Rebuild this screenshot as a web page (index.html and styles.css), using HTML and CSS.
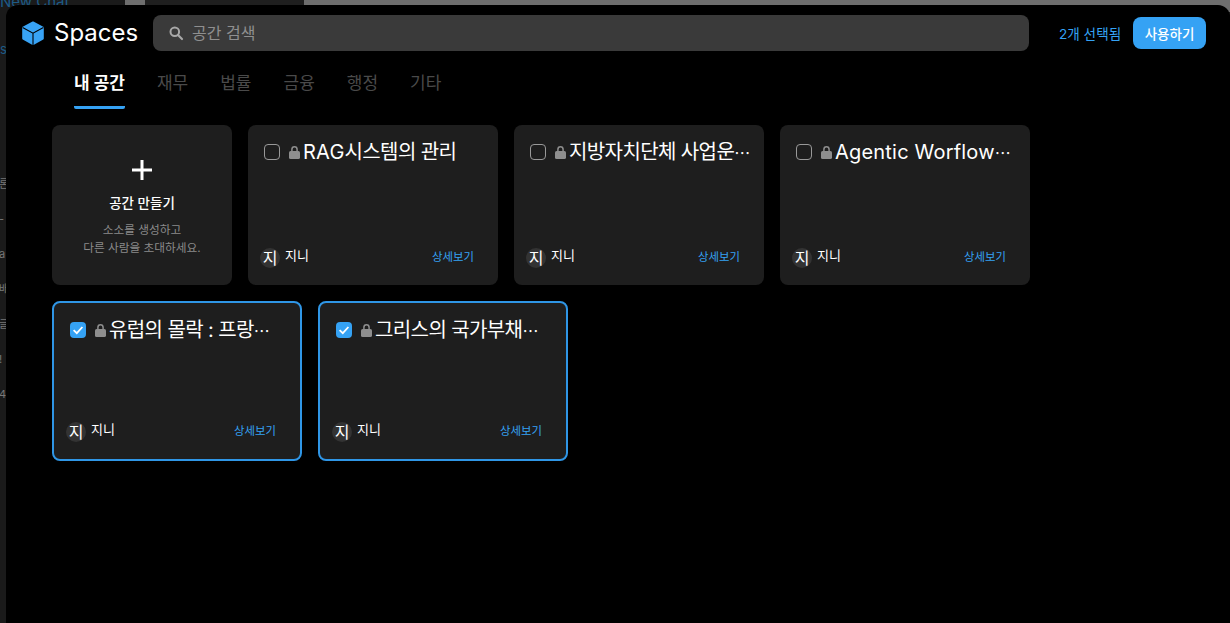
FILE: index.html
```html
<!DOCTYPE html>
<html lang="ko">
<head>
    <meta charset="UTF-8">
    <title>Spaces</title>
    <link rel="stylesheet" href="styles.css">
</head>
<body>
    <!-- app behind the modal -->
    <div class="backdrop">
        <div class="backdrop-top">
            <div class="chat-tab"><span>New Chat</span></div>
            <div class="top-gap small"></div>
            <div class="top-dark"></div>
            <div class="top-gap"></div>
        </div>
        <div class="side-list">
            <span class="side-s">s</span>
            <span class="side-item first">론</span>
            <span class="side-item">-</span>
            <span class="side-item">a</span>
            <span class="side-item">배</span>
            <span class="side-item">글</span>
            <span class="side-item">!</span>
            <span class="side-item">4</span>
        </div>
    </div>

    <div class="modal">
        <header class="modal-header">
            <div class="brand">
                <svg class="cube" viewBox="0 0 24 24" width="24" height="24">
                    <path d="M12 1.4 21.8 6.6V17.6L12 23 2.2 17.6V6.6Z" fill="#38a3f5" stroke="#38a3f5" stroke-width="2" stroke-linejoin="round"/>
                    <path d="M1.6 6.4 12 12.2 22.4 6.4M12 12.2V24" fill="none" stroke="#000" stroke-width="1.1"/>
                </svg>
                <span class="brand-name">Spaces</span>
            </div>
            <div class="search">
                <svg viewBox="0 0 16 16" width="16" height="16">
                    <circle cx="6.8" cy="6.8" r="4.3" fill="none" stroke="#a8a8a8" stroke-width="2"/>
                    <path d="M10 10l4 4" stroke="#a8a8a8" stroke-width="2.2" stroke-linecap="round"/>
                </svg>
                <span>공간 검색</span>
            </div>
            <span class="selected-count">2개 선택됨</span>
            <button class="use-btn">사용하기</button>
        </header>

        <nav class="tabs">
            <a class="tab active">내 공간</a>
            <a class="tab">재무</a>
            <a class="tab">법률</a>
            <a class="tab">금융</a>
            <a class="tab">행정</a>
            <a class="tab">기타</a>
        </nav>

        <main class="spaces">
            <div class="card create-card">
                <svg viewBox="0 0 20 20" width="20" height="20">
                    <path d="M10 0v20M0 10h20" stroke="#fff" stroke-width="3"/>
                </svg>
                <div class="create-title">공간 만들기</div>
                <div class="create-desc">소소를 생성하고<br>다른 사람을 초대하세요.</div>
            </div>

            <div class="card">
                <div class="card-title">
                    <span class="check"></span>
                    <svg class="lock" viewBox="0 0 11 13" width="11" height="13"><path d="M2.9 5.5V3.4a2.6 2.6 0 0 1 5.2 0V5.5" fill="none" stroke="#8e8e8e" stroke-width="1.5"/><rect y="5" width="11" height="8" rx="1.6" fill="#8e8e8e"/></svg>
                    <span class="title-text"><span class="latin">RAG</span>시스템의 관리</span>
                </div>
                <div class="card-foot">
                    <span class="avatar">지</span><span class="owner">지니</span>
                    <a class="detail">상세보기</a>
                </div>
            </div>

            <div class="card">
                <div class="card-title">
                    <span class="check"></span>
                    <svg class="lock" viewBox="0 0 11 13" width="11" height="13"><path d="M2.9 5.5V3.4a2.6 2.6 0 0 1 5.2 0V5.5" fill="none" stroke="#8e8e8e" stroke-width="1.5"/><rect y="5" width="11" height="8" rx="1.6" fill="#8e8e8e"/></svg>
                    <span class="title-text">지방자치단체 사업운<span class="more">⋯</span></span>
                </div>
                <div class="card-foot">
                    <span class="avatar">지</span><span class="owner">지니</span>
                    <a class="detail">상세보기</a>
                </div>
            </div>

            <div class="card">
                <div class="card-title">
                    <span class="check"></span>
                    <svg class="lock" viewBox="0 0 11 13" width="11" height="13"><path d="M2.9 5.5V3.4a2.6 2.6 0 0 1 5.2 0V5.5" fill="none" stroke="#8e8e8e" stroke-width="1.5"/><rect y="5" width="11" height="8" rx="1.6" fill="#8e8e8e"/></svg>
                    <span class="title-text"><span class="latin">Agentic Worflow</span><span class="more">⋯</span></span>
                </div>
                <div class="card-foot">
                    <span class="avatar">지</span><span class="owner">지니</span>
                    <a class="detail">상세보기</a>
                </div>
            </div>

            <div class="card selected">
                <div class="card-title">
                    <span class="check on"><svg viewBox="0 0 16 16" width="16" height="16"><path d="M3.6 8.2 6.8 11.2 12.4 5" fill="none" stroke="#fff" stroke-width="1.8"/></svg></span>
                    <svg class="lock" viewBox="0 0 11 13" width="11" height="13"><path d="M2.9 5.5V3.4a2.6 2.6 0 0 1 5.2 0V5.5" fill="none" stroke="#8e8e8e" stroke-width="1.5"/><rect y="5" width="11" height="8" rx="1.6" fill="#8e8e8e"/></svg>
                    <span class="title-text">유럽의 몰락 : 프랑<span class="more">⋯</span></span>
                </div>
                <div class="card-foot">
                    <span class="avatar">지</span><span class="owner">지니</span>
                    <a class="detail">상세보기</a>
                </div>
            </div>

            <div class="card selected">
                <div class="card-title">
                    <span class="check on"><svg viewBox="0 0 16 16" width="16" height="16"><path d="M3.6 8.2 6.8 11.2 12.4 5" fill="none" stroke="#fff" stroke-width="1.8"/></svg></span>
                    <svg class="lock" viewBox="0 0 11 13" width="11" height="13"><path d="M2.9 5.5V3.4a2.6 2.6 0 0 1 5.2 0V5.5" fill="none" stroke="#8e8e8e" stroke-width="1.5"/><rect y="5" width="11" height="8" rx="1.6" fill="#8e8e8e"/></svg>
                    <span class="title-text">그리스의 국가부채<span class="more">⋯</span></span>
                </div>
                <div class="card-foot">
                    <span class="avatar">지</span><span class="owner">지니</span>
                    <a class="detail">상세보기</a>
                </div>
            </div>
        </main>
    </div>
</body>
</html>
```

FILE: styles.css
```css
* { box-sizing: border-box; }
html, body { height: 100%; }
body { margin: 0; height: 623px; overflow: hidden; position: relative; background: #1a1a1a; color: #fff; font-family: Inter, "Noto Sans CJK KR", sans-serif; }

/* app behind the modal */
.backdrop { position: absolute; top: 0; left: 0; right: 0; bottom: 0; overflow: hidden; }
.backdrop-top { display: flex; height: 12px; }
.chat-tab { width: 125px; background: #1a1a1a; color: #1d5b87; font-size: 15px; line-height: 12px; white-space: nowrap; overflow: hidden; }
.chat-tab span { display: block; margin-top: -4px; }
.top-gap { flex: 1; background: #6e6e6e; }
.top-gap.small { flex: 0 0 20px; }
.top-dark { width: 159px; background: #1f1f1f; }
.side-list { width: 6px; overflow: hidden; display: flex; flex-direction: column; color: #777; font-size: 11px; white-space: nowrap; }
.side-s { color: #1d5b87; font-size: 13px; margin-top: 29px; height: 16px; }
.side-item { height: 35px; line-height: 35px; margin-left: -1px; }
.side-item.first { margin-top: 110px; }

.modal { position: absolute; top: 5px; left: 6px; right: 0; bottom: 0; background: #000; border-radius: 12px 12px 0 0; }

.modal-header { display: flex; align-items: center; height: 36px; margin-top: 10px; padding: 0 24px 0 15px; }
.brand { display: flex; align-items: center; width: 132px; flex-shrink: 0; }
.cube { margin-right: 9px; }
.brand-name { font-size: 24px; line-height: 36px; }
.search { flex: 0 0 876px; height: 36px; display: flex; align-items: center; gap: 8px; padding-left: 15px; background: #3a3a3a; border-radius: 8px; color: #8f8f8f; font-size: 16px; }
.search span { margin-top: -2px; }
.selected-count { margin-left: 30px; font-size: 13.6px; color: #35a2f4; white-space: nowrap; margin-top: -1px; }
.use-btn { margin-left: auto; width: 73px; height: 32px; border: none; border-radius: 8px; background: #35a2f4; color: #fff; font: 500 13.5px Inter, "Noto Sans CJK KR", sans-serif; }

.tabs { display: flex; gap: 32px; margin: 14px 0 0 68px; height: 44px; }
.tab { height: 44px; line-height: 36px; font-size: 17px; color: #4a4a4a; border-bottom: 3px solid transparent; }
.tab.active { color: #fff; font-weight: 700; border-bottom-color: #35a2f4; border-radius: 0 0 2px 2px; }

.spaces { display: flex; flex-wrap: wrap; gap: 16px; width: 978px; margin: 16px 0 0 46px; }
.card { display: flex; flex-direction: column; justify-content: space-between; width: 250px; height: 160px; padding: 16px 24px 15px 12px; background: #1e1e1e; border-radius: 8px; }
.card.selected { border: 2px solid #2f96e6; }

.create-card { width: 180px; align-items: center; justify-content: flex-start; padding: 35px 0 0; text-align: center; }
.create-card svg { flex-shrink: 0; }
.create-title { margin-top: 14px; font-size: 13.5px; font-weight: 500; line-height: 18px; }
.create-desc { margin-top: 9px; font-size: 11.7px; line-height: 18px; color: #8a8a8a; }

.card-title { display: flex; align-items: center; height: 22px; padding-left: 4px; }
.check { flex: 0 0 16px; height: 16px; border: 1.5px solid #999; border-radius: 4px; margin-right: 9px; }
.check.on { background: #35a2f4; border: none; }
.check svg { display: block; }
.lock { flex-shrink: 0; margin-right: 3px; }
.title-text { font-size: 20px; line-height: 22px; letter-spacing: -0.6px; white-space: nowrap; }
.title-text .latin { letter-spacing: 0.2px; }
.title-text .more { font-size: 16px; letter-spacing: 0; }

.card-foot { display: flex; align-items: center; height: 24px; }
.avatar { width: 20px; height: 20px; border-radius: 50%; background: #333; font-size: 16px; line-height: 20px; text-align: center; margin-right: 5px; }
.owner { font-size: 13px; margin-top: -7px; }
.detail { margin-left: auto; margin-top: -4px; font-size: 11.4px; color: #35a2f4; }
```
